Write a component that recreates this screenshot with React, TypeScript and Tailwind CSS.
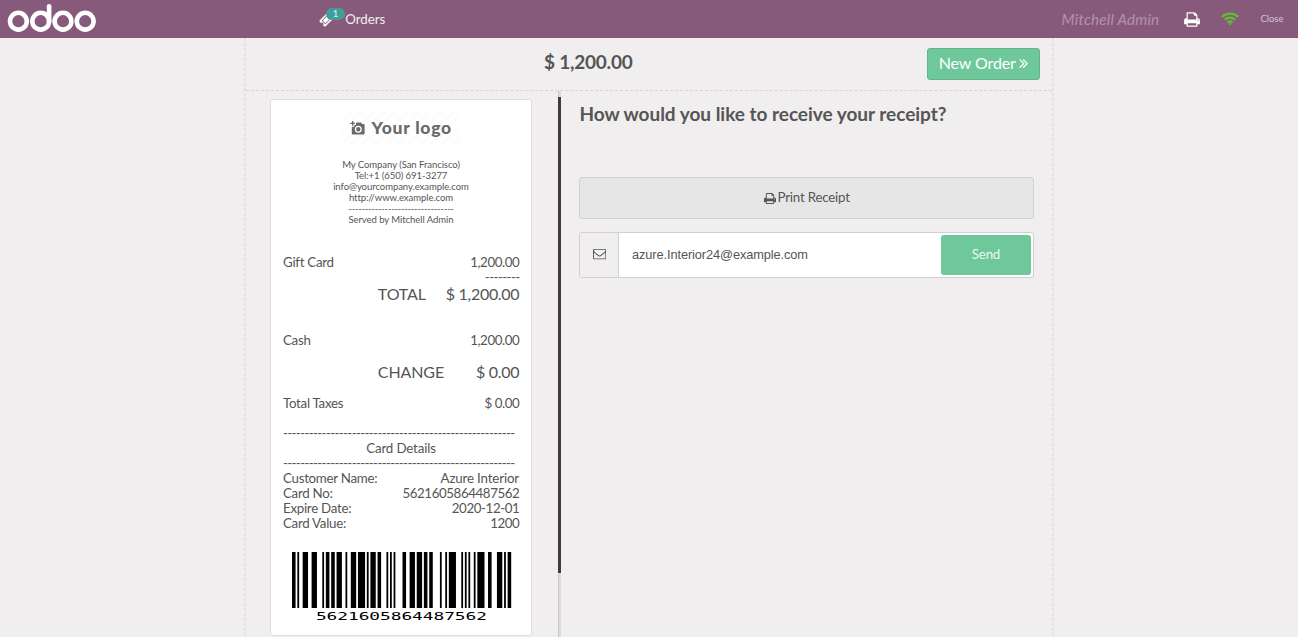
import type { ReactNode } from 'react';

const PRINT =
  'M384 1536h896v-256H384v256zm0-640h896V512h-160q-40 0-68-28t-28-68V256H384v640zm1152 64q0-26-19-45t-45-19-45 19-19 45 19 45 45 19 45-19 19-45zm128 0v416q0 13-9.5 22.5t-22.5 9.5h-224v160q0 40-28 68t-68 28H352q-40 0-68-28t-28-68v-160H32q-13 0-22.5-9.5T0 1376V960q0-79 56.5-135.5T192 768h64V224q0-40 28-68t68-28h672q40 0 88 20t76 48l152 152q28 28 48 76t20 88v256h64q79 0 135.5 56.5T1664 960z';
const ENVELOPE =
  'M1664 1504V736q-32 36-69 66-268 206-426 338-51 43-83 67t-86.5 48.5T897 1280h-2q-48 0-102.5-24.5T706 1207t-83-67Q465 1008 197 802q-37-30-69-66v768q0 13 9.5 22.5t22.5 9.5h1472q13 0 22.5-9.5t9.5-22.5zm0-1051v-24.5l-.5-13-3-12.5-5.5-9-9-7.5-14-2.5H160q-13 0-22.5 9.5T128 416q0 168 147 284 193 152 401 317 6 5 35 29.5t46 37.5 44.5 31.5T852 1143t43 9h2q20 0 43-9t50.5-27.5T1035 1084t46-37.5 35-29.5q208-165 401-317 54-43 100.5-115.5T1664 453zm128-37v1088q0 66-47 113t-113 47H160q-66 0-113-47T0 1504V416q0-66 47-113t113-47h1472q66 0 113 47t47 113z';
const TICKET =
  'M1024 452l316 316-572 572-316-316zm-211 979l618-618q19-19 19-45t-19-45l-362-362q-18-18-45-18t-45 18L361 979q-19 19-19 45t19 45l362 362q18 18 45 18t45-18zm889-637l-907 908q-37 37-90.5 37t-90.5-37l-126-125q56-56 56-136t-56-136-136-56-136 56L91 1179q-37-37-37-90.5T91 998l907-906q37-37 90.5-37t90.5 37l125 125q-56 56-56 136t56 136 136 56 136-56l126 125q37 37 37 90.5t-37 89.5z';
const ANGLES =
  'M595 960q0 13-10 23l-466 466q-10 10-23 10t-23-10l-50-50q-10-10-10-23t10-23l393-393L23 567q-10-10-10-23t10-23l50-50q10-10 23-10t23 10l466 466q10 10 10 23zm384 0q0 13-10 23l-466 466q-10 10-23 10t-23-10l-50-50q-10-10-10-23t10-23l393-393-393-393q-10-10-10-23t10-23l50-50q10-10 23-10t23 10l466 466q10 10 10 23z';

function Glyph({ d, box, className }: { d: string; box: string; className: string }) {
  return (
    <svg viewBox={box} className={className} fill="currentColor">
      <path d={d} />
    </svg>
  );
}

function OdooLogo() {
  return (
    <svg className="h-[38px] w-[100px] shrink-0" viewBox="0 0 100 38" fill="none" stroke="#fff" strokeWidth="4.6">
      <circle cx="18.4" cy="21.2" r="8.4" />
      <circle cx="40.7" cy="21.2" r="8.4" />
      <circle cx="63" cy="21.2" r="8.4" />
      <circle cx="85.2" cy="21.2" r="8.4" />
      <path d="M49.1 6.3V21.5" strokeLinecap="round" />
    </svg>
  );
}

function Wifi() {
  return (
    <svg className="h-[14px] w-[18px]" viewBox="0 0 18 14" fill="none" stroke="#5fbf2c" strokeWidth="2.2">
      <path d="M.9 4.9a11.6 11.6 0 0 1 16.2 0" />
      <path d="M3.7 7.8a7.6 7.6 0 0 1 10.6 0" />
      <path d="M6.4 10.5a3.9 3.9 0 0 1 5.2 0" />
      <path d="M7.3 11.8L9 13.5l1.7-1.7a2.6 2.6 0 0 0-3.4 0z" fill="#5fbf2c" stroke="none" />
    </svg>
  );
}

// Code 128 (set C) bar and space widths: start, eight digit pairs, checksum, stop.
const CODE128 = ['211232', '331121', '213212', '314111', '312311', '111422', '313121', '241211', '431111', '121142', '2331112'];

function Barcode() {
  const unit = 219.2 / 123;
  let x = 0;
  const bars: ReactNode[] = [];
  CODE128.join('').split('').forEach((w, i) => {
    const width = Number(w) * unit;
    if (i % 2 === 0) bars.push(<rect key={i} x={x} y="0" width={width} height="56" />);
    x += width;
  });
  return (
    <svg className="ml-[8.7px] block h-[72px] w-[220px] text-black" viewBox="0 0 220 72" fill="currentColor">
      {bars}
      <text
        transform="translate(23.9 68) scale(1.75 1)"
        className="font-['DejaVu_Sans_Mono',monospace] text-[10.2px]"
        textLength="97.6"
      >
        5621605864487562
      </text>
    </svg>
  );
}

function Row({ label, value }: { label: string; value: string }) {
  return (
    <div className="flex h-[15px] justify-between">
      <span className="tracking-[-0.27px]">{label}</span>
      <span className="-mr-[0.4px] tracking-[-0.4px]">{value}</span>
    </div>
  );
}

function BigRow({ label, value }: { label: string; value: string }) {
  return (
    <div className="flex h-[18px] justify-between pl-[94.8px] text-[16px] leading-[18px]">
      <span className="tracking-[-0.1px]">{label}</span>
      <span className="-mr-[0.3px] tracking-[-0.3px]">{value}</span>
    </div>
  );
}

function Rule() {
  return (
    <div className="whitespace-nowrap tracking-[-0.65px]">
      ------------------------------------------------------
    </div>
  );
}

function Receipt() {
  return (
    <div className="h-[537px] w-[262px] shrink-0 rounded-[3px] border border-[#dedcdc] bg-white pl-[12px] pr-[12px] text-[13.3px] leading-[15px] tracking-[-0.15px]">
      <div className="mx-auto mt-[12px] flex h-[32px] w-[118px] items-center bg-[repeating-linear-gradient(135deg,#fff_0px,#fff_4px,#fcfcfc_4px,#fcfcfc_8px)] pl-[8px] text-[#6a6a6a]">
        <svg className="h-[14px] w-[15px] shrink-0" viewBox="0 0 15 14" fill="currentColor">
          <path d="M2 0h1.3v1.7H5V3H3.3v1.7H2V3H.3V1.7H2z" />
          <path
            fillRule="evenodd"
            d="M6 1.6h5l1 1.4h1.6a1 1 0 0 1 1 1v8.4a1 1 0 0 1-1 1H2.8a1 1 0 0 1-1-1V5.7H4.3V4H6zM8.3 4.7a3.5 3.5 0 1 0 0 7a3.5 3.5 0 0 0 0-7zm0 1.3a2.2 2.2 0 1 1 0 4.400a2.200 2.200 0 0 1 0-4.400z"
          />
          <circle cx="8.3" cy="8.2" r="1.1" />
        </svg>
        <span className="ml-[6.5px] whitespace-nowrap text-[17.5px] font-black leading-[20px] tracking-[0.75px]">Your logo</span>
      </div>
      <div className="mt-[15px] text-center text-[9.5px] leading-[11px] tracking-[-0.05px]">
        <div>My Company (San Francisco)</div>
        <div>Tel:+1 (650) 691-3277</div>
        <div>info@yourcompany.example.com</div>
        <div>http://www.example.com</div>
        <div className="tracking-[-0.25px]">--------------------------------</div>
        <div>Served by Mitchell Admin</div>
      </div>
      <div className="mt-[30px]">
        <Row label="Gift Card" value="1,200.00" />
        <div className="-mr-[0.6px] h-[15px] text-right tracking-[-0.6px]">--------</div>
        <BigRow label="TOTAL" value="$ 1,200.00" />
      </div>
      <div className="mt-[30px]">
        <Row label="Cash" value="1,200.00" />
      </div>
      <div className="mt-[15px]">
        <BigRow label="CHANGE" value="$ 0.00" />
      </div>
      <div className="mt-[15px]">
        <Row label="Total Taxes" value="$ 0.00" />
      </div>
      <div className="mt-[15px]">
        <Rule />
        <div className="text-center">Card Details</div>
        <Rule />
        <div className="flex h-[15px] justify-between">
          <span className="tracking-[-0.27px]">Customer Name:</span>
          <span>Azure Interior</span>
        </div>
        <Row label="Card No:" value="5621605864487562" />
        <Row label="Expire Date:" value="2020-12-01" />
        <Row label="Card Value:" value="1200" />
      </div>
      <div className="mt-[21px]">
        <Barcode />
      </div>
    </div>
  );
}

function SideEdge() {
  return (
    <div className="w-[2px] shrink-0 bg-[repeating-linear-gradient(180deg,#e3e1e1_0px,#e3e1e1_3px,transparent_3px,transparent_5px)]" />
  );
}

export default function App() {
  return (
    <div className="flex h-[637px] w-[1298px] flex-col overflow-hidden bg-[#f0eeee] font-['Lato',sans-serif] text-[#555]">
      <header className="flex h-[38px] shrink-0 items-center bg-[#875a7b] text-[#eee]">
        <OdooLogo />
        <div className="relative ml-[219px] flex items-center">
          <Glyph d={TICKET} box="0 0 1792 1792" className="h-[15px] w-[15px] text-white" />
          <span className="absolute left-[7px] top-[-3px] flex h-[12px] w-[19px] items-center justify-center rounded-full bg-[#3f9f98] text-[9.5px] leading-[12px]">
            1
          </span>
          <span className="ml-[11.3px] text-[13.3px] leading-[16px] tracking-[-0.05px]">Orders</span>
        </div>
        <div className="ml-auto flex items-center">
          <span className="text-[15.2px] italic leading-[18px] tracking-[0.21px] text-[#b292aa]">Mitchell Admin</span>
          <Glyph d={PRINT} box="0 0 1664 1792" className="ml-[24.5px] h-[17px] w-[16px] text-white" />
          <div className="ml-[21px]">
            <Wifi />
          </div>
          <span className="ml-[21.5px] mr-[14.5px] text-[9.5px] leading-[12px] text-[#d6c6d2]">Close</span>
        </div>
      </header>

      <main className="ml-[244px] flex min-h-0 w-[810px] flex-1">
        <SideEdge />
        <div className="flex min-w-0 flex-1 flex-col">
          <div className="flex h-[53px] shrink-0 items-start border-b border-dashed border-[#d6d4d4]">
            <h1 className="ml-[298px] mt-[11px] text-[19px] font-bold leading-[26px] tracking-[-0.22px]">$ 1,200.00</h1>
            <button className="ml-auto mr-[12px] mt-[10px] flex h-[32px] w-[113px] items-center justify-center rounded-[3px] border border-[#64b48a] bg-[#6ec89b] pb-[2px] text-[16px] tracking-[-0.1px] text-white">
              New Order
              <Glyph d={ANGLES} box="0 0 1024 1792" className="ml-[3px] h-[16px] w-[9.5px]" />
            </button>
          </div>

          <div className="flex min-h-0 flex-1">
            <section className="flex w-[312px] shrink-0 items-start pl-[24px] pt-[8px]">
              <Receipt />
            </section>
            <div className="flex w-[3px] shrink-0 flex-col border-l border-[#c8c8c8] bg-[#dedddd] pt-[6px]">
              <div className="-ml-px h-[476px] w-[3px] bg-[#3c3c3c]" />
            </div>
            <section className="flex flex-1 flex-col pl-[18.4px] pr-[18px]">
              <h2 className="mt-[10px] whitespace-nowrap text-[19px] font-bold leading-[26px] tracking-[-0.02px]">
                How would you like to receive your receipt?
              </h2>
              <button className="mt-[50px] flex h-[42px] items-center justify-center rounded-[3px] border border-[#d0d0d0] bg-[#e6e6e6] text-[13.3px] tracking-[-0.2px]">
                <Glyph d={PRINT} box="0 0 1664 1792" className="mr-[2px] h-[13px] w-[12px]" />
                Print Receipt
              </button>
              <div className="mt-[13px] flex h-[46px] items-center rounded-[3px] border border-[#d0d0d0] bg-white">
                <div className="flex h-full w-[38.6px] items-center justify-center rounded-l-[2px] border-r border-[#d0d0d0] bg-[#f0eeee] pb-[2px] pl-[1px]">
                  <Glyph d={ENVELOPE} box="0 0 1792 1792" className="h-[13.3px] w-[13.3px]" />
                </div>
                <span className="ml-[13px] font-['Liberation_Sans',sans-serif] text-[12.8px] tracking-[-0.1px]">
                  azure.Interior24@example.com
                </span>
                <button className="ml-auto mr-[2px] h-[40px] w-[90px] rounded-[3px] bg-[#6ec89b] text-[13.3px] tracking-[-0.2px] text-[#e9f7f0]">
                  Send
                </button>
              </div>
            </section>
          </div>
        </div>
        <SideEdge />
      </main>
    </div>
  );
}
